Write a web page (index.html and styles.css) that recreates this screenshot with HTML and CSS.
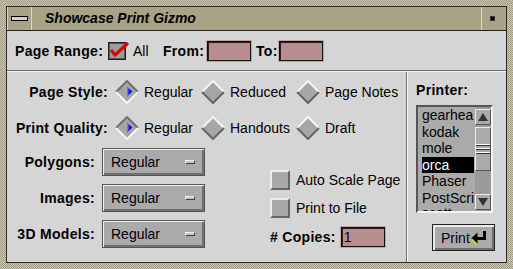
FILE: index.html
```html
<!DOCTYPE html>
<html lang="en">
<head>
  <meta charset="UTF-8" />
  <title>Showcase Print Gizmo</title>
  <link rel="stylesheet" href="styles.css">
</head>
<body>
<div class="window">
  <div class="inner">
    <!-- Title bar -->
    <div class="titlebar">
      <div class="tb-btn menu-btn"><span class="bar"></span></div>
      <div class="title">Showcase Print Gizmo</div>
      <div class="tb-btn dot-btn"><span class="dot"></span></div>
    </div>

    <!-- Page range -->
    <div class="range-row">
      <span class="lbl range-lbl">Page Range:</span>
      <span class="check">
        <svg width="22" height="20" viewBox="0 0 22 20">
          <rect x="0.5" y="1.5" width="17" height="17" fill="#9c9c9c" stroke="#222"/>
          <rect x="1.5" y="2.5" width="15" height="15" fill="none" stroke="#555"/>
          <path d="M3 9 L7 14 L20 2" fill="none" stroke="#e00000" stroke-width="3.2" stroke-linejoin="round"/>
        </svg>
      </span>
      <span class="all">All</span>
      <span class="lbl from-lbl">From:</span>
      <span class="field"></span>
      <span class="lbl to-lbl">To:</span>
      <span class="field"></span>
    </div>

    <div class="main">
      <div class="left">
        <!-- Style and quality -->
        <div class="radios">
          <span class="lbl">Page Style:</span>
          <span class="radio">
            <svg width="24" height="24" viewBox="0 0 24 24"><polygon points="12,1 23,12 12,23 1,12" fill="#a6a6a6"/><polyline points="1,12 12,1 23,12" fill="none" stroke="#707070" stroke-width="2"/><polyline points="23,12 12,23 1,12" fill="none" stroke="#f4f4f4" stroke-width="2"/><polygon points="12,7 17.5,11.5 12,16.5" fill="#1010e8"/><polygon points="12,7 13.5,8.2 13.5,15.2 12,16.5" fill="#7070ff"/></svg>
            Regular
          </span>
          <span class="radio">
            <svg width="24" height="24" viewBox="0 0 24 24"><polygon points="12,1 23,12 12,23 1,12" fill="#a6a6a6"/><polyline points="1,12 12,1 23,12" fill="none" stroke="#f4f4f4" stroke-width="2"/><polyline points="23,12 12,23 1,12" fill="none" stroke="#666" stroke-width="2"/></svg>
            Reduced
          </span>
          <span class="radio">
            <svg width="24" height="24" viewBox="0 0 24 24"><polygon points="12,1 23,12 12,23 1,12" fill="#a6a6a6"/><polyline points="1,12 12,1 23,12" fill="none" stroke="#f4f4f4" stroke-width="2"/><polyline points="23,12 12,23 1,12" fill="none" stroke="#666" stroke-width="2"/></svg>
            Page Notes
          </span>

          <span class="lbl">Print Quality:</span>
          <span class="radio">
            <svg width="24" height="24" viewBox="0 0 24 24"><polygon points="12,1 23,12 12,23 1,12" fill="#a6a6a6"/><polyline points="1,12 12,1 23,12" fill="none" stroke="#707070" stroke-width="2"/><polyline points="23,12 12,23 1,12" fill="none" stroke="#f4f4f4" stroke-width="2"/><polygon points="12,7 17.5,11.5 12,16.5" fill="#1010e8"/><polygon points="12,7 13.5,8.2 13.5,15.2 12,16.5" fill="#7070ff"/></svg>
            Regular
          </span>
          <span class="radio">
            <svg width="24" height="24" viewBox="0 0 24 24"><polygon points="12,1 23,12 12,23 1,12" fill="#a6a6a6"/><polyline points="1,12 12,1 23,12" fill="none" stroke="#f4f4f4" stroke-width="2"/><polyline points="23,12 12,23 1,12" fill="none" stroke="#666" stroke-width="2"/></svg>
            Handouts
          </span>
          <span class="radio">
            <svg width="24" height="24" viewBox="0 0 24 24"><polygon points="12,1 23,12 12,23 1,12" fill="#a6a6a6"/><polyline points="1,12 12,1 23,12" fill="none" stroke="#f4f4f4" stroke-width="2"/><polyline points="23,12 12,23 1,12" fill="none" stroke="#666" stroke-width="2"/></svg>
            Draft
          </span>
        </div>

        <div class="lower">
          <!-- Option menus -->
          <div class="menus">
            <div class="menu-row"><span class="lbl">Polygons:</span><span class="optmenu">Regular<i></i></span></div>
            <div class="menu-row"><span class="lbl">Images:</span><span class="optmenu">Regular<i></i></span></div>
            <div class="menu-row"><span class="lbl">3D Models:</span><span class="optmenu">Regular<i></i></span></div>
          </div>
          <!-- Toggles -->
          <div class="opts">
            <div class="toggle"><span class="box"></span>Auto Scale Page</div>
            <div class="toggle"><span class="box"></span>Print to File</div>
            <div class="copies"><span class="lbl"># Copies:</span><span class="field copies-field">1</span></div>
          </div>
        </div>
      </div>

      <!-- Printer list -->
      <div class="right">
        <div class="lbl printer-lbl">Printer:</div>
        <div class="list">
          <ul class="items">
            <li>gearhea</li>
            <li>kodak</li>
            <li>mole</li>
            <li class="sel">orca</li>
            <li>Phaser</li>
            <li>PostScri</li>
            <li class="partial">scott</li>
          </ul>
          <div class="scrollbar">
            <div class="arrow"><svg width="12" height="12" viewBox="0 0 12 12"><polygon points="6,2 11,10 1,10" fill="#333"/></svg></div>
            <div class="track"><div class="thumb"><span></span><span></span><span></span></div></div>
            <div class="arrow"><svg width="12" height="12" viewBox="0 0 12 12"><polygon points="1,2 11,2 6,10" fill="#333"/></svg></div>
          </div>
        </div>
        <div class="print">
          Print
          <svg width="17" height="14" viewBox="0 0 17 14">
            <rect x="12" y="0" width="3" height="9" fill="#000"/>
            <rect x="5" y="6" width="10" height="3" fill="#000"/>
            <polygon points="0,7.5 6.5,1.5 6.5,13" fill="#000"/>
            <line x1="0.5" y1="8" x2="6" y2="13" stroke="#f0e000" stroke-width="1.3"/>
          </svg>
        </div>
      </div>
    </div>
  </div>
</div>
</body>
</html>
```

FILE: styles.css
```css
body {
  margin: 0;
  background: #d5d5d5;
  font-family: "Liberation Sans", Arial, sans-serif;
  font-size: 14px;
  color: #000;
}

.window {
  width: 513px;
  height: 269px;
  box-sizing: border-box;
  padding: 6px;
  background: repeating-conic-gradient(#cdc9b2 0 25%, #9e9a82 0 50%) 0 0 / 2px 2px;
}

.inner {
  height: 100%;
  box-sizing: border-box;
  border: 1px solid #2a2a2a;
  display: flex;
  flex-direction: column;
  background: #d5d5d5;
}

.lbl {
  font-weight: bold;
  letter-spacing: 0.3px;
}

/* title bar */
.titlebar {
  height: 24px;
  box-sizing: border-box;
  flex-shrink: 0;
  display: flex;
  background: #a8a386;
  border-bottom: 1px solid #222;
}

.tb-btn {
  width: 24px;
  display: flex;
  align-items: center;
  justify-content: center;
}

.menu-btn {
  border-left: 1px solid #dcd8c4;
  border-right: 1px solid #dcd8c4;
  box-sizing: border-box;
  width: 25px;
}

.menu-btn .bar {
  width: 15px;
  height: 3px;
  border: 1px solid #000;
  background: #d8d4be;
}

.title {
  flex: 1;
  margin-left: 13px;
  font-weight: bold;
  font-style: italic;
  line-height: 23px;
}

.dot-btn {
  width: 25px;
  box-sizing: border-box;
  border-left: 1px solid #dcd8c4;
}

.dot-btn .dot {
  width: 3px;
  height: 3px;
  background: #000;
  border: 1px solid #333;
  margin-left: -3px;
}

/* page range */
.range-row {
  height: 40px;
  box-sizing: border-box;
  flex-shrink: 0;
  display: flex;
  align-items: center;
  padding-left: 8px;
  border-bottom: 1px solid #6e6e6e;
}

.range-lbl {
  width: 93px;
}

.check {
  width: 18px;
  height: 20px;
  margin-right: 7px;
}

.check svg {
  overflow: visible;
}

.all {
  width: 30px;
}

.from-lbl {
  width: 43px;
}

.to-lbl {
  width: 22px;
  margin-left: 4px;
}

.field {
  width: 46px;
  height: 22px;
  box-sizing: border-box;
  background: #b88d90;
  border: 1px solid #c9a1a3;
  box-shadow: inset 0 0 0 1px #111, inset 1px 1px 0 1px #222;
}

/* main area */
.main {
  flex: 1;
  display: flex;
  border-top: 1px solid #f4f4f4;
}

.left {
  width: 400px;
  box-sizing: border-box;
  border-right: 1px solid #6e6e6e;
  padding-top: 2px;
}

.radios {
  display: grid;
  grid-template-columns: 100px 86px 95px auto;
  grid-auto-rows: 36px;
  align-items: center;
  padding-left: 8px;
}

.radios .lbl {
  text-align: right;
  padding-right: 7px;
}

.radio {
  display: flex;
  align-items: center;
  gap: 5px;
}

.lower {
  display: flex;
  padding-left: 8px;
  margin-top: 2px;
}

.menus {
  display: flex;
  flex-direction: column;
  gap: 8px;
}

.menu-row {
  display: flex;
  align-items: center;
}

.menu-row .lbl {
  width: 80px;
  text-align: right;
  margin-right: 7px;
}

.optmenu {
  width: 103px;
  height: 28px;
  box-sizing: border-box;
  display: flex;
  align-items: center;
  padding-left: 8px;
  background: #aaaaaa;
  border: 1px solid #555;
  box-shadow: inset 1px 1px 0 #f0f0f0, inset -2px -2px 0 #707070;
}

.optmenu i {
  margin-left: auto;
  margin-right: 9px;
  width: 10px;
  height: 4px;
  box-sizing: border-box;
  background: #c8c8c8;
  border: 1px solid;
  border-color: #f4f4f4 #444 #444 #f4f4f4;
}

.opts {
  margin-left: 65px;
  align-self: flex-end;
  display: flex;
  flex-direction: column;
  gap: 8px;
}

.toggle {
  display: flex;
  align-items: center;
  gap: 6px;
  height: 20px;
}

.toggle .box {
  width: 20px;
  height: 20px;
  box-sizing: border-box;
  background: #a8a8a8;
  border: 2px solid;
  border-color: #ececec #666 #666 #ececec;
}

.copies {
  display: flex;
  align-items: center;
  height: 22px;
}

.copies-field {
  margin-left: 4px;
  padding-left: 3px;
  line-height: 20px;
}

/* printer list */
.right {
  flex: 1;
  padding-left: 8px;
  border-left: 1px solid #fafafa;
}

.printer-lbl {
  margin-top: 9px;
  line-height: 18px;
}

.list {
  margin-top: 6px;
  width: 77px;
  height: 108px;
  box-sizing: border-box;
  display: flex;
  background: #aaaaaa;
  border: 2px solid;
  border-color: #555 #f4f4f4 #f4f4f4 #555;
}

.items {
  flex: 1;
  overflow: hidden;
  list-style: none;
  margin: 0;
  padding: 0 0 0 4px;
  line-height: 16.5px;
  white-space: nowrap;
}

.items li {
  overflow: hidden;
  margin-right: 1px;
}

.items .sel {
  background: #000;
  color: #fff;
}

.items .partial {
  height: 5px;
  line-height: 14px;
}

.scrollbar {
  width: 16px;
  display: flex;
  flex-direction: column;
  padding: 2px 0 1px;
  background: #9a9a9a;
}

.arrow {
  height: 16px;
  box-sizing: border-box;
  display: flex;
  align-items: center;
  justify-content: center;
  background: #aaaaaa;
  border: 1px solid;
  border-color: #eee #555 #555 #eee;
}

.track {
  flex: 1;
  padding-top: 2px;
}

.thumb {
  height: 44px;
  box-sizing: border-box;
  background: #aaaaaa;
  border: 1px solid;
  border-color: #eee #555 #555 #eee;
  display: flex;
  flex-direction: column;
  justify-content: center;
  gap: 2px;
}

.thumb span {
  height: 1px;
  background: #fff;
  border-bottom: 1px solid #333;
}

.print {
  margin-top: 11px;
  margin-left: 16px;
  width: 63px;
  height: 27px;
  box-sizing: border-box;
  display: flex;
  align-items: center;
  gap: 1px;
  padding-left: 8px;
  background: #aaaaaa;
  border: 1px solid #222;
  box-shadow: inset 2px 2px 0 #ececec, inset -2px -2px 0 #6e6e6e;
}
```
